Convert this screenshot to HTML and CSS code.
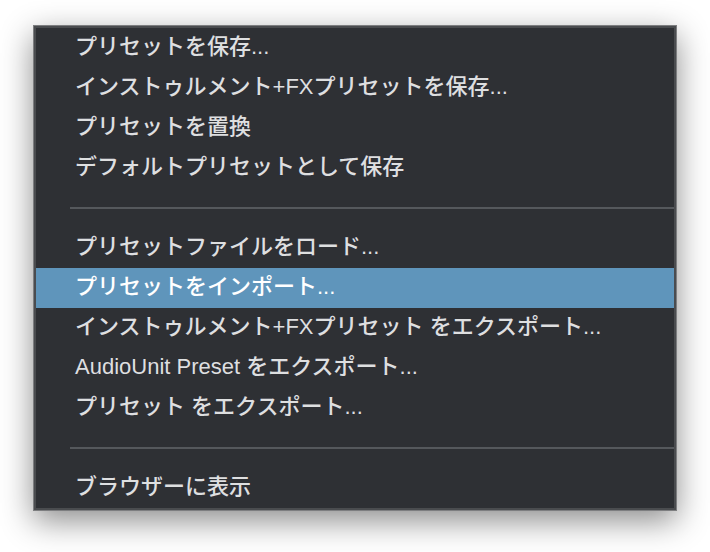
FILE: index.html
```html
<!DOCTYPE html>
<html lang="ja">

<head>
    <meta charset="UTF-8">
    <meta name="viewport" content="width=device-width, initial-scale=1.0">
    <title>Preset Menu</title>
    <link rel="stylesheet" href="styles.css">
</head>

<body>

    <ul class="menu">
        <li class="item">プリセットを保存...</li>
        <li class="item">インストゥルメント+FXプリセットを保存...</li>
        <li class="item">プリセットを置換</li>
        <li class="item">デフォルトプリセットとして保存</li>
        <li class="separator"></li>
        <li class="item">プリセットファイルをロード...</li>
        <li class="item active">プリセットをインポート...</li>
        <li class="item">インストゥルメント+FXプリセット をエクスポート...</li>
        <li class="item">AudioUnit Preset をエクスポート...</li>
        <li class="item">プリセット をエクスポート...</li>
        <li class="separator"></li>
        <li class="item">ブラウザーに表示</li>
    </ul>

</body>

</html>
```

FILE: styles.css
```css
body {
    margin: 0;
    padding: 25px 0 41px 33px;
    background: #fff;
    font-family: "Liberation Sans", "Noto Sans CJK JP", sans-serif;
}

.menu {
    list-style: none;
    box-sizing: border-box;
    width: 644px;
    margin: 0;
    padding: 2px;
    background-color: #2e3034;
    border: 1px solid #7d7e80;
    box-shadow: inset 0 0 0 2px #4a4c4f, 0 10px 30px rgba(0, 0, 0, 0.45);
}

.item {
    height: 40px;
    line-height: 38px;
    padding-left: 39px;
    font-size: 22px;
    font-weight: 500;
    color: #dedfe0;
    white-space: nowrap;
}

.item.active {
    background-color: #5f95bb;
    color: #fff;
}

.separator {
    height: 40px;
    margin-left: 34px;
    display: flex;
    align-items: center;
}

.separator::after {
    content: "";
    flex: 1;
    height: 2px;
    background-color: #55585c;
}
```
